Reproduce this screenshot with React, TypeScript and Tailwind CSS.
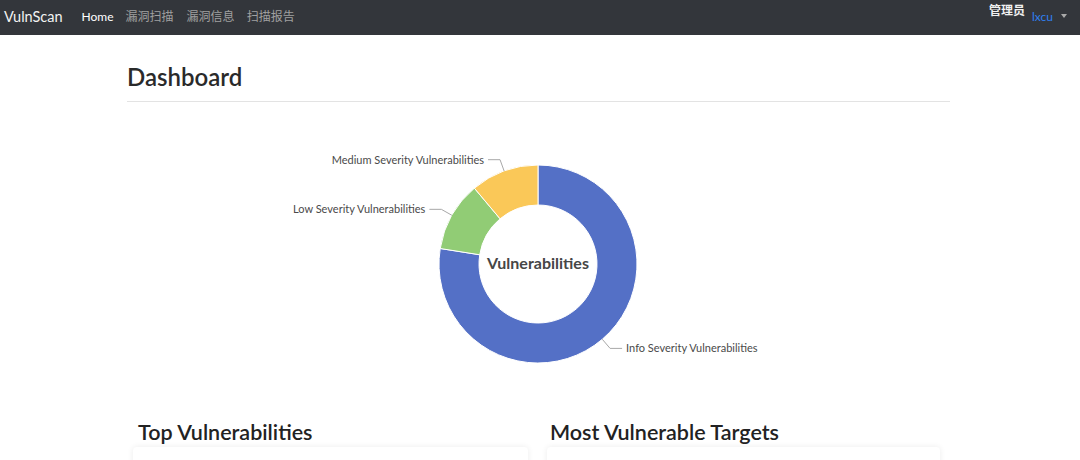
import React from "react";

const CX = 411;
const CY = 162;
const R_OUT = 99;
const R_IN = 59;

// angles are degrees, clockwise from 12 o'clock
const slices = [
  { name: "Info Severity Vulnerabilities", from: 0, to: 279, color: "#5470c6", side: "right" },
  { name: "Low Severity Vulnerabilities", from: 279, to: 320, color: "#91cc75", side: "left" },
  { name: "Medium Severity Vulnerabilities", from: 320, to: 360, color: "#fac858", side: "left" },
];

function pt(a: number, r: number) {
  const rad = (a * Math.PI) / 180;
  return [CX + r * Math.sin(rad), CY - r * Math.cos(rad)];
}

function arc(from: number, to: number) {
  const large = to - from > 180 ? 1 : 0;
  const [x1, y1] = pt(from, R_OUT);
  const [x2, y2] = pt(to, R_OUT);
  const [x3, y3] = pt(to, R_IN);
  const [x4, y4] = pt(from, R_IN);
  return `M${x1} ${y1} A${R_OUT} ${R_OUT} 0 ${large} 1 ${x2} ${y2} L${x3} ${y3} A${R_IN} ${R_IN} 0 ${large} 0 ${x4} ${y4} Z`;
}

function Donut() {
  return (
    <svg width="823" height="300" viewBox="0 0 823 300" className="block">
      {slices.map((s) => (
        <path key={s.name} d={arc(s.from, s.to)} fill={s.color} stroke="#fff" strokeWidth="1" />
      ))}
      {slices.map((s) => {
        const mid = (s.from + s.to) / 2;
        const [x1, y1] = pt(mid, R_OUT);
        const [x2, y2] = pt(mid, R_OUT + 12);
        const x3 = s.side === "right" ? x2 + 12 : x2 - 12;
        return (
          <g key={s.name + "-label"}>
            <polyline points={`${x1},${y1} ${x2},${y2} ${x3},${y2}`} fill="none" stroke="#a8a8a8" strokeWidth="1" />
            <text
              x={s.side === "right" ? x3 + 4 : x3 - 4}
              y={y2 + 4}
              textAnchor={s.side === "right" ? "start" : "end"}
              fontSize="11"
              fill="#4a4a4a"
              style={{ fontFamily: "Lato, 'Open Sans', sans-serif" }}
            >
              {s.name}
            </text>
          </g>
        );
      })}
      <text
        x={CX}
        y={CY + 5}
        textAnchor="middle"
        fontSize="16"
        fontWeight="bold"
        fill="#464646"
        style={{ fontFamily: "Lato, 'Open Sans', sans-serif" }}
      >
        Vulnerabilities
      </text>
    </svg>
  );
}

export default function App() {
  return (
    <div className="h-[460px] bg-white font-['Lato','Noto_Sans_CJK_SC',sans-serif] overflow-hidden">
      {/* Navbar */}
      <nav className="h-[35px] bg-[#33363b] flex items-start justify-between">
        <div className="flex items-center h-[33px]">
          <span className="ml-[4px] text-[14.5px] text-[#f2f2f2]">VulnScan</span>
          <span className="ml-[19px] text-[12px] text-white">Home</span>
          <span className="ml-[12px] text-[12px] text-[#a0a0a0]">漏洞扫描</span>
          <span className="ml-[13px] text-[12px] text-[#a0a0a0]">漏洞信息</span>
          <span className="ml-[12px] text-[12px] text-[#a0a0a0]">扫描报告</span>
        </div>
        <div className="flex items-start mr-[13px]">
          <span className="mt-[2px] text-[12px] font-bold text-[#f0f0f0]">管理员</span>
          <span className="ml-[7px] mt-[8px] text-[12px] text-[#2f7ff0]">lxcu</span>
          <span className="ml-[8px] mt-[14px] w-0 h-0 border-l-[3px] border-r-[3px] border-t-[4px] border-l-transparent border-r-transparent border-t-[#aaa]" />
        </div>
      </nav>

      {/* Main */}
      <main className="w-[823px] ml-[127px]">
        <h1 className="mt-[27px] pb-[10px] border-b border-[#e3e3e3] text-[24px] leading-[29px] font-semibold text-[#2a2a2a]">
          Dashboard
        </h1>

        <Donut />

        <div className="mt-[17px] grid grid-cols-[395px_393px] gap-x-[19px] px-[6px]">
          <section>
            <h2 className="pl-[5px] text-[21.5px] leading-[26px] font-semibold text-[#222]">Top Vulnerabilities</h2>
            <div className="mt-[2px] h-[60px] rounded-sm bg-white shadow-[0_0_6px_rgba(0,0,0,0.08)]" />
          </section>
          <section>
            <h2 className="pl-[3px] text-[21.5px] leading-[26px] font-semibold text-[#222]">Most Vulnerable Targets</h2>
            <div className="mt-[2px] h-[60px] rounded-sm bg-white shadow-[0_0_6px_rgba(0,0,0,0.08)]" />
          </section>
        </div>
      </main>
    </div>
  );
}
